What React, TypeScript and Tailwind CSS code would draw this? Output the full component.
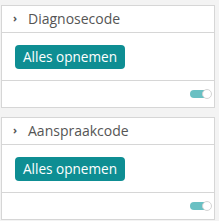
import React from "react";

const Toggle = () => {
  return (
    <div className="relative w-[22px] h-[10px]">
      <div className="absolute left-0 top-[1px] w-[18px] h-[8px] rounded-full bg-[#69c0c3]" />
      <div className="absolute right-0 top-0 w-[10px] h-[10px] rounded-full bg-white border border-[#d4d4d4]" />
    </div>
  );
};

const CodeCard = ({ title }: { title: string }) => {
  return (
    <div className="bg-white border border-[#d6d6d6] flex flex-col">
      <div className="h-[27px] border-b border-[#d6d6d6] flex items-center pl-[11px] text-[#555]">
        <span className="text-[11px] font-bold w-[15px] leading-none -mt-[3px]">›</span>
        <span className="text-[14px] leading-none">{title}</span>
      </div>
      <div className="h-[48px] flex items-center pl-[13px] border-b border-[#d6d6d6]">
        <button className="w-[110px] h-[24px] rounded-[4px] bg-[#0e8e93] text-white text-[13.6px] leading-none whitespace-nowrap">
          Alles opnemen
        </button>
      </div>
      <div className="h-[26px] flex items-center justify-end pr-[2px]">
        <Toggle />
      </div>
    </div>
  );
};

export default function App() {
  return (
    <div
      className="w-[219px] h-[221px] bg-[#f3f3f3] pt-[5px] pl-[1px] pr-[4px] flex flex-col gap-[9px]"
      style={{ fontFamily: '"Open Sans", sans-serif' }}
    >
      <CodeCard title="Diagnosecode" />
      <CodeCard title="Aanspraakcode" />
    </div>
  );
}
